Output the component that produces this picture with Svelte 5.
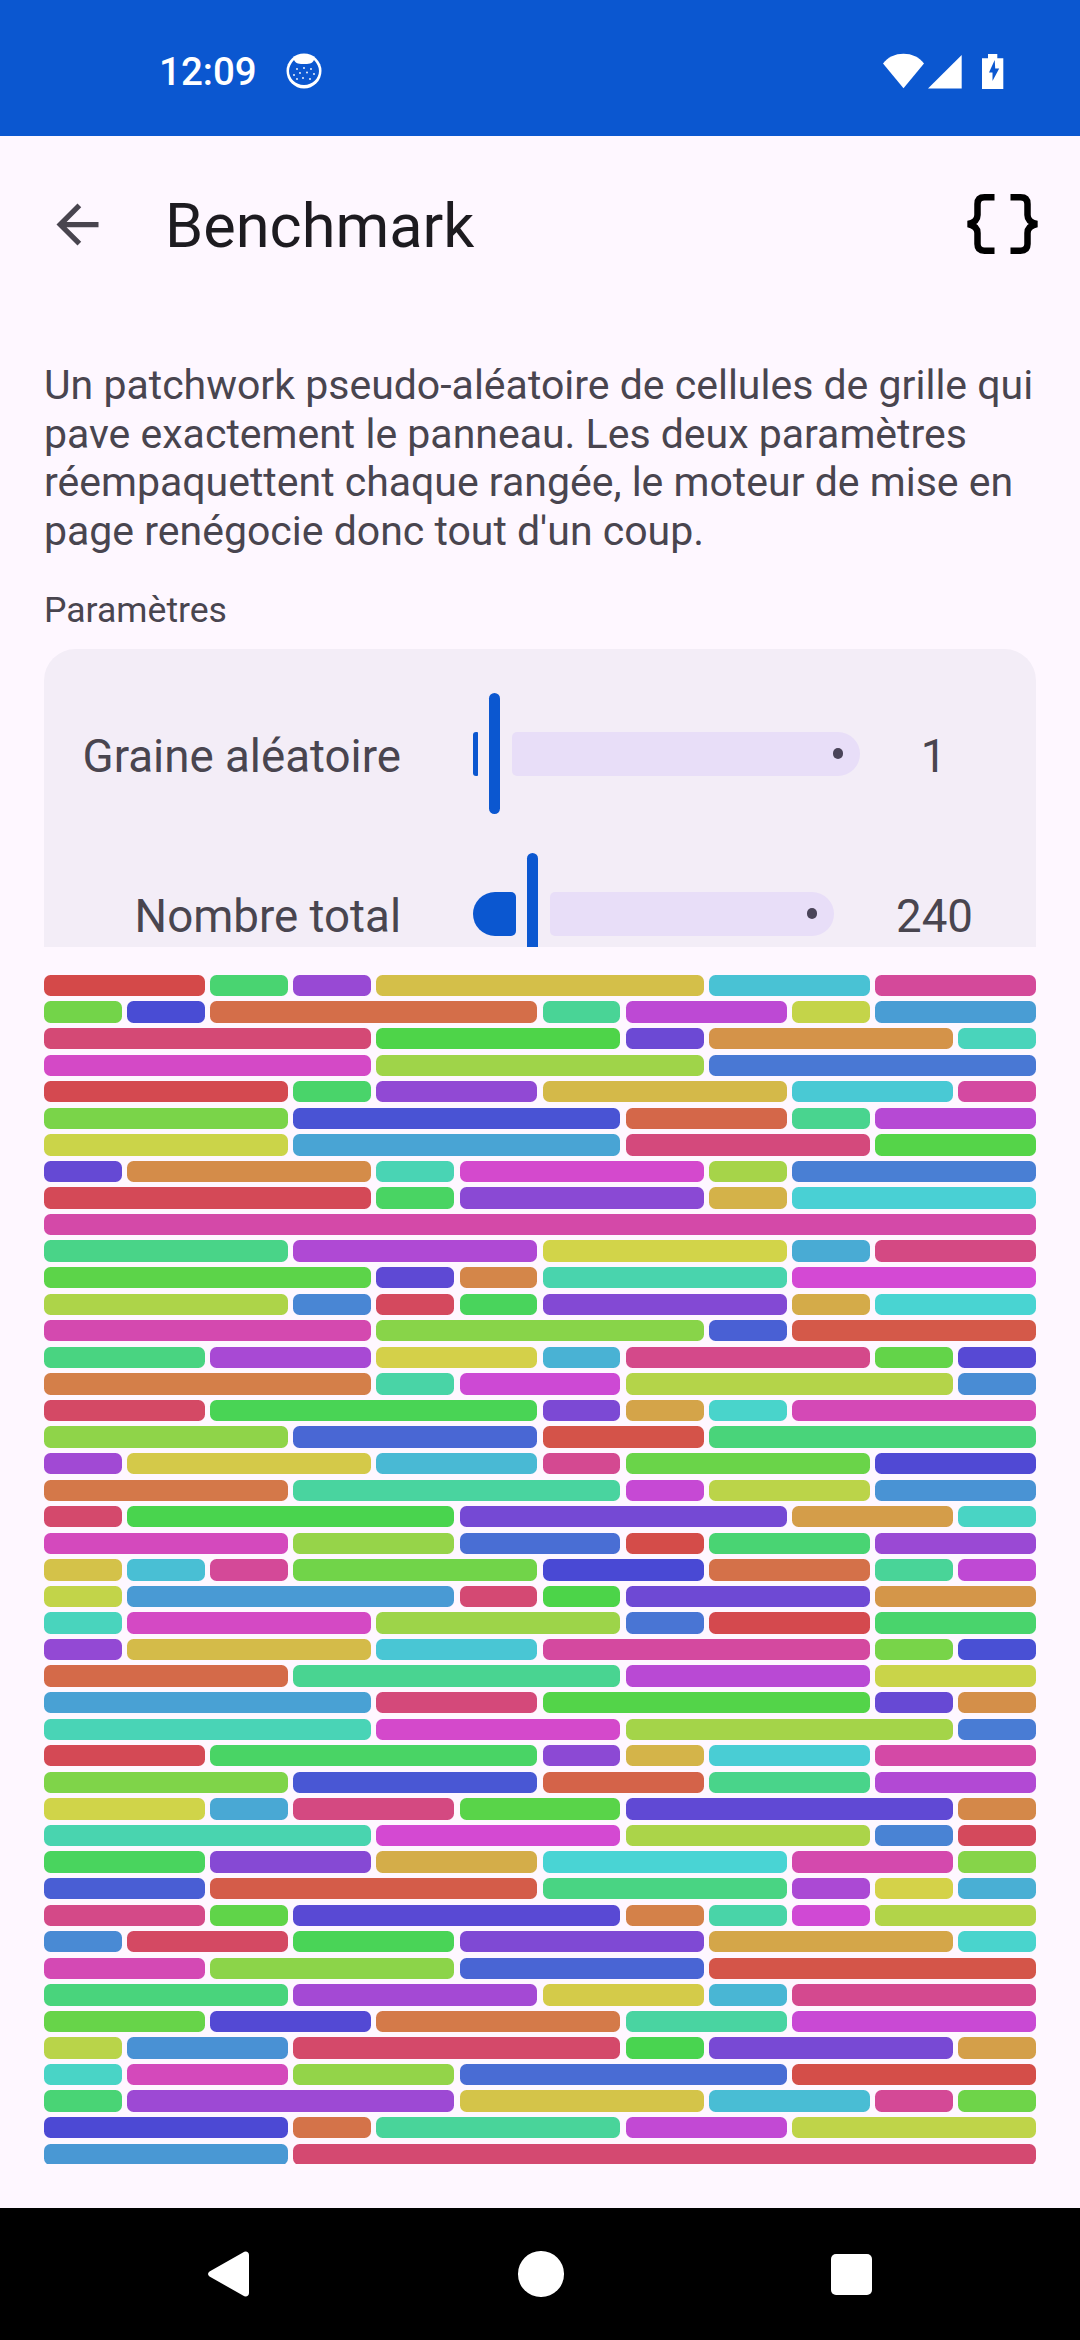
<script>
  const rows = [
    [2,1,1,4,2,2],[1,1,4,1,2,1,2],[4,3,1,3,1],[4,4,4],[3,1,2,3,2,1],[3,4,2,1,2],[3,4,3,2],[1,3,1,3,1,3],[4,1,3,1,3],[12],
    [3,3,3,1,2],[4,1,1,3,3],[3,1,1,1,3,1,2],[4,4,1,3],[2,2,2,1,3,1,1],[4,1,2,4,1],[2,4,1,1,1,3],[3,3,2,4],[1,3,2,1,3,2],[3,4,1,2,2],
    [1,4,4,2,1],[3,2,2,1,2,2],[1,1,1,3,2,2,1,1],[1,4,1,1,3,2],[1,3,3,1,2,2],[1,3,2,4,1,1],[3,4,3,2],[4,2,4,1,1],[4,3,4,1],[2,4,1,1,2,2],
    [3,3,2,2,2],[2,1,2,2,4,1],[4,3,3,1,1],[2,2,2,3,2,1],[2,4,3,1,1,1],[2,1,4,1,1,1,2],[1,2,2,3,3,1],[2,3,3,4],[3,3,2,1,3],[2,2,3,2,3],
    [1,2,4,1,3,1],[1,2,2,4,3],[1,4,3,2,1,1],[3,1,3,2,3],[3,9]
  ];
  let n = 0;
  const cells = [];
  rows.forEach((row, r) => {
    for (const span of row) {
      cells.push({ span, hue: (n * 137) % 360 });
      n++;
    }
    if (r === 9) n += 3;
  });
  const paragraph = "Un patchwork pseudo-aléatoire de cellules de grille qui pave exactement le panneau. Les deux paramètres réempaquettent chaque rangée, le moteur de mise en page renégocie donc tout d'un coup.";
</script>

<div class="screen">
  <header class="status">
    <span class="time">12:09</span>
    <svg class="cat" viewBox="0 0 36 36" aria-hidden="true">
      <circle cx="18" cy="18" r="17.5" fill="#fff"/>
      <path d="M8 7c1 2 2 3 4 3.500 2 .5 4 .5 6 .5s4 0 6-.5c2-.5 3-1.500 4-3.500 3 3 5 7 5 11 0 7.500-6.500 14-15 14S3 25.500 3 18c0-4 2-8 5-11z" fill="#0B57D0"/>
      <g fill="#fff"><circle cx="11" cy="16" r=".9"/><circle cx="18" cy="15" r=".9"/><circle cx="25" cy="16" r=".9"/><circle cx="14" cy="20" r=".9"/><circle cx="21" cy="19.500" r=".9"/><circle cx="28" cy="21" r=".9"/><circle cx="8" cy="22" r=".9"/><circle cx="17" cy="25" r=".9"/><circle cx="24" cy="26" r=".9"/><circle cx="11" cy="26" r=".9"/></g>
    </svg>
    <svg class="sys" viewBox="0 0 130 40" aria-hidden="true">
      <path d="M20.500 37.300 0 12.500C5 6 12 2.700 20.500 2.700S36 6 41 12.500z" fill="#fff"/>
      <path d="M45 37.500H78.700V4z" fill="#fff"/>
      <path d="M105 3h9.300v4.300h6v30.700h-21.300V7.300h6z" fill="#fff"/>
      <path d="M111.700 9 106 21.500h3.500v8.500l6.700-12.500h-4z" fill="#0B57D0"/>
    </svg>
  </header>

  <div class="bar">
    <svg class="back" viewBox="0 0 24 24" aria-hidden="true"><path d="M20 11H7.830l5.590-5.590L12 4l-8 8 8 8 1.410-1.410L7.830 13H20v-2z"/></svg>
    <h1>Benchmark</h1>
    <svg class="braces" viewBox="0 0 90 90" aria-hidden="true">
      <path d="M37.500 18.300H27.500Q20.500 18.300 20.500 25V36Q20.500 43 11 45Q20.500 47 20.500 54V65Q20.500 71.700 27.500 71.700H37.500"/>
      <path d="M53.500 18.300H63.500Q70.500 18.300 70.500 25V36Q70.500 43 80 45Q70.500 47 70.500 54V65Q70.500 71.700 63.500 71.700H53.500"/>
    </svg>
  </div>

  <main>
    <p class="intro">{paragraph}</p>
    <div class="section">Paramètres</div>
    <section class="panel">
      <div class="row">
        <span class="label">Graine aléatoire</span>
        <div class="slider one">
          <i class="active"></i><i class="thumb"></i>
          <i class="rest"><b></b></i>
        </div>
        <span class="value v1">1</span>
      </div>
      <div class="row">
        <span class="label">Nombre total</span>
        <div class="slider two">
          <i class="active"></i><i class="thumb"></i>
          <i class="rest"><b></b></i>
        </div>
        <span class="value v2">240</span>
      </div>
    </section>
    <div class="grid">
      {#each cells as c}
        <div class="cell" style="grid-column: span {c.span}; background: hsl({c.hue}, 62%, 56%)"></div>
      {/each}
    </div>
  </main>

  <nav>
    <svg class="n-back" viewBox="0 0 42 46" aria-hidden="true"><path d="M1.500 20.500 35 1.500C37.500-.5 41 .5 41 4v38c0 3.500-3.500 4.500-6 2.500L1.500 25.500c-2-1.500-2-3.500 0-5z" fill="#fff"/></svg>
    <span class="n-home"></span>
    <span class="n-rec"></span>
  </nav>
</div>

<style>
  :global(body) { margin: 0; background: #FEF7FF; }
  .screen {
    width: 1080px; height: 2340px; display: flex; flex-direction: column;
    background: #FEF7FF; font-family: Roboto, sans-serif; overflow: hidden;
  }
  .status {
    height: 136px; flex: none; background: #0B57D0; display: flex; align-items: center;
    padding: 0 67px 0 159px; box-sizing: border-box; color: #fff;
  }
  .time { font-size: 38.500px; font-weight: 500; line-height: 1; margin-top: 8px; }
  .cat { width: 36px; height: 36px; margin-left: 29px; margin-top: 6px; }
  .sys { width: 130px; height: 40px; margin-left: auto; margin-top: 6px; }

  .bar { height: 176px; flex: none; display: flex; align-items: center; padding-left: 46px; padding-right: 33px; }
  .back { width: 63px; height: 63px; fill: #49454F; flex: none; }
  h1 { margin: 6px 0 0 56px; font-size: 61.300px; font-weight: 400; color: #1D1B20; line-height: 1; flex: 1; }
  .braces { width: 90px; height: 90px; flex: none; fill: none; stroke: #000; stroke-width: 6.500; stroke-linejoin: bevel; }

  main { flex: 1; min-height: 0; padding: 49px 44px 0; display: flex; flex-direction: column; }
  .intro { margin: 0; font-size: 41px; line-height: 48.700px; color: #49454F; }
  .section { margin-top: 33px; font-size: 35.600px; line-height: 42px; color: #49454F; }
  .panel {
    margin-top: 18px; height: 298px; flex: none; box-sizing: border-box; overflow: hidden;
    background: #F3EDF7; border-radius: 31.500px 31.500px 0 0; padding: 44px 32px 0 0;
    display: flex; flex-direction: column; gap: 38.500px;
  }
  .row { display: flex; align-items: center; height: 121.500px; flex: none; color: #49454F; font-size: 45.700px; }
  .label { width: 357px; text-align: right; flex: none; white-space: nowrap; margin-top: 5px; }
  .slider { position: relative; height: 121.500px; margin-left: 72px; flex: none; display: flex; align-items: center; }
  .slider i { display: block; flex: none; }
  .slider.one { width: 387px; }
  .slider.two { width: 361px; }
  .active { height: 44px; background: #0B57D0; }
  .one .active { width: 5px; border-radius: 3px 1px 1px 3px; }
  .two .active { width: 43px; border-radius: 22px 5px 5px 22px; }
  .thumb { width: 11px; height: 121.500px; background: #0B57D0; border-radius: 6px; margin: 0 12px 0 11px; }
  .rest { flex: 1 !important; height: 44px; background: #E8DEF8; border-radius: 5px 22px 22px 5px; display: flex !important; align-items: center; justify-content: flex-end; padding-right: 17px; }
  .rest b { width: 10.500px; height: 10.500px; border-radius: 50%; background: #4A4459; display: block; }
  .value { flex: none; text-align: center; margin-top: 5px; }
  .v1 { width: 147px; }
  .v2 { width: 201px; }

  .grid {
    margin-top: 28px; height: 1189.500px; flex: none; overflow: hidden;
    display: grid; grid-template-columns: repeat(12, 1fr); grid-auto-rows: 21.320px; gap: 5.250px;
  }
  .cell { border-radius: 6.500px; }

  nav { height: 132px; flex: none; background: #000; display: flex; align-items: center; }
  .n-back { width: 42px; height: 46px; margin-left: 208px; }
  .n-home { width: 45.500px; height: 45.500px; border-radius: 50%; background: #fff; margin-left: 268px; }
  .n-rec { width: 41px; height: 41px; border-radius: 5px; background: #fff; margin-left: 267px; }
</style>
